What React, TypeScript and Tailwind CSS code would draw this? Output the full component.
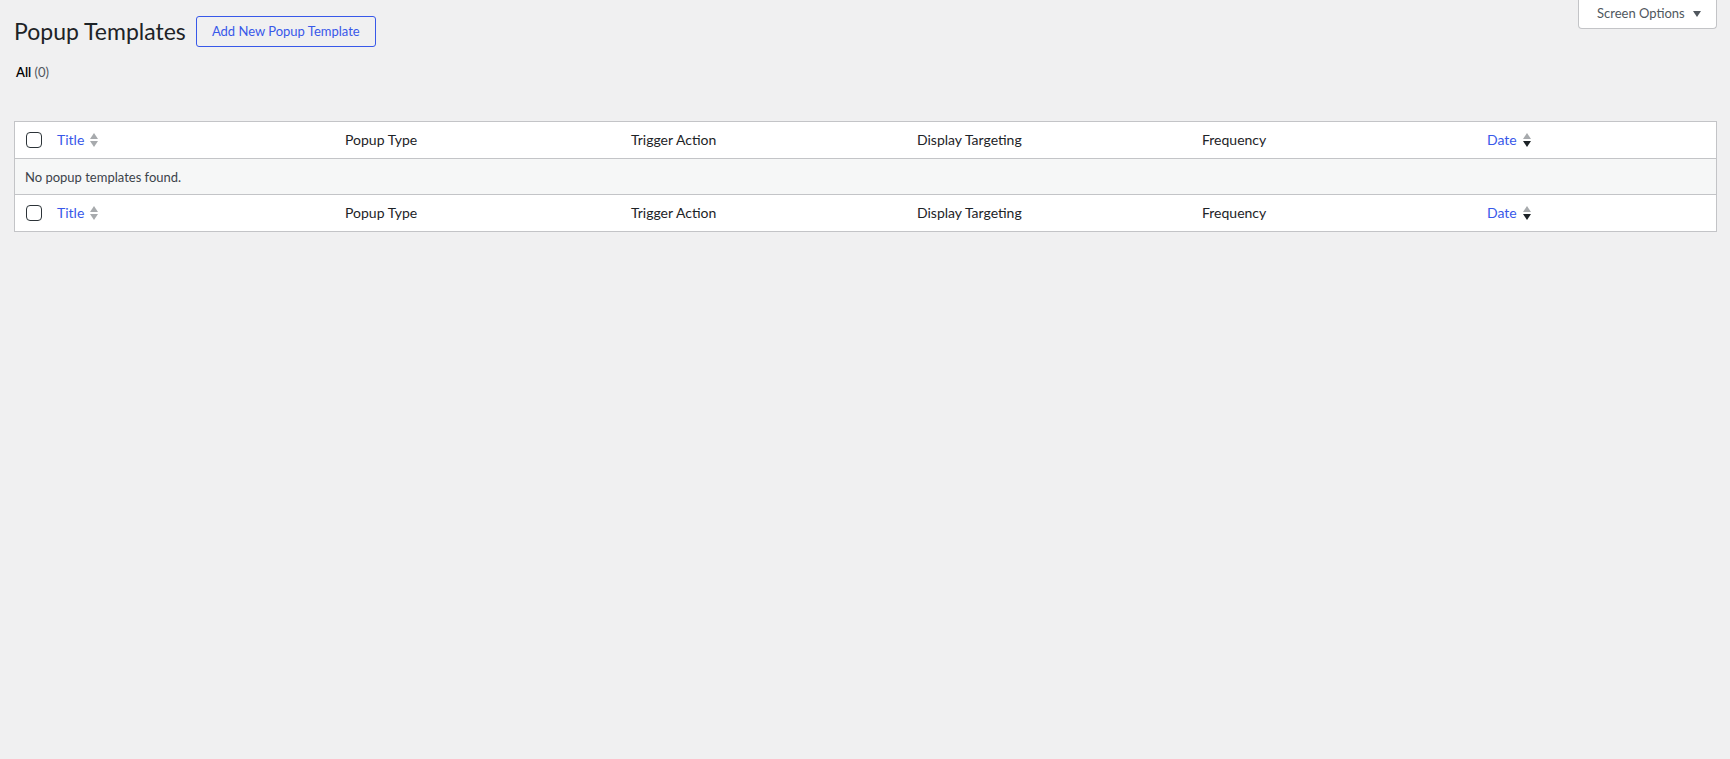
import React from "react";

const SortIcon = ({ active = false }: { active?: boolean }) => (
  <svg width="8" height="16" viewBox="0 0 8 16" className="shrink-0">
    <path d="M4 1 L8 7 L0 7 Z" fill="#a7aaad" />
    <path d="M0 9 L8 9 L4 15 Z" fill={active ? "#1d2327" : "#a7aaad"} />
  </svg>
);

const Checkbox = () => (
  <span className="block w-[16px] h-[16px] rounded-[4px] border border-[#2c3338] bg-white" />
);

const columns = ["Popup Type", "Trigger Action", "Display Targeting", "Frequency"];

const HeaderRow = ({ last = false }: { last?: boolean }) => (
  <div
    className={
      "grid grid-cols-[32px_288px_286px_286px_285px_285px_1fr] items-center text-[14px] leading-[20px] text-[#1d2327] " +
      (last ? "h-[36px]" : "h-[37px] border-b border-[#c3c4c7]")
    }
  >
    <div className="pl-[11px]">
      <Checkbox />
    </div>
    <div className="pl-[10px] flex items-center gap-[6px]">
      <span className="text-[#3858e9]">Title</span>
      <SortIcon />
    </div>
    {columns.map((c) => (
      <div key={c} className="pl-[10px]">
        {c}
      </div>
    ))}
    <div className="pl-[10px] flex items-center gap-[6px]">
      <span className="text-[#3858e9]">Date</span>
      <SortIcon active />
    </div>
  </div>
);

export default function App() {
  return (
    <div className="min-h-screen bg-[#f0f0f1] font-['Lato',sans-serif] text-[13px] text-[#3c434a]">
      <div className="flex justify-between items-start h-[56px]">
        <div className="flex items-start pt-[16px] pl-[14px]">
          <h1 className="text-[23px] leading-[30px] font-normal text-[#1d2327]">Popup Templates</h1>
          <button className="ml-[10px] w-[180px] h-[31px] flex items-center justify-center rounded-[3px] border border-[#3858e9] text-[13px] text-[#3858e9] bg-[#f0f0f1]">
            Add New Popup Template
          </button>
        </div>
        <button className="mr-[13px] w-[139px] h-[29px] flex items-center pl-[18px] gap-[8px] bg-white border-x border-b border-[#c3c4c7] rounded-b-[4px] text-[13px] text-[#50575e]">
          <span>Screen Options</span>
          <svg width="8" height="6" viewBox="0 0 8 6">
            <path d="M0 0 L8 0 L4 6 Z" fill="#50575e" />
          </svg>
        </button>
      </div>

      <div className="mt-[6px] pl-[16px] leading-[20px] text-[13px]">
        <span className="font-semibold text-[#000]">All</span>{" "}
        <span className="text-[#50575e]">(0)</span>
      </div>

      <div className="mt-[39px] ml-[14px] mr-[13px] border border-[#c3c4c7] bg-white">
        <HeaderRow />
        <div className="h-[36px] flex items-center pl-[10px] bg-[#f6f7f7] border-b border-[#c3c4c7] text-[13px] leading-[20px] text-[#3c434a]">
          No popup templates found.
        </div>
        <HeaderRow last />
      </div>
    </div>
  );
}
